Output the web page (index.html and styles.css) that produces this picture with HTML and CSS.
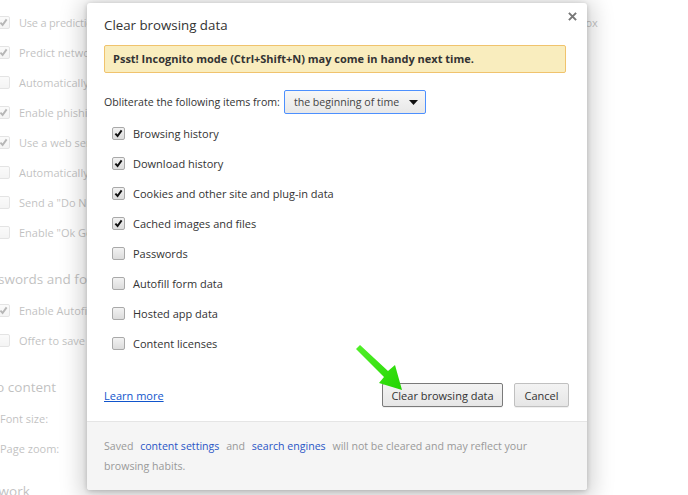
FILE: index.html
```html
<!DOCTYPE html>
<html lang="en">
<head>
    <meta charset="UTF-8">
    <meta name="viewport" content="width=device-width, initial-scale=1.0">
    <title>Settings - Clear browsing data</title>
    <link rel="stylesheet" href="styles.css">
</head>
<body>
    <!-- settings page behind the overlay -->
    <div class="settings">
        <div class="row long"><span class="cb on"><svg viewBox="0 0 13 13"><path d="M2.8 6.6 L5.4 9.4 L10.2 2.8" /></svg></span><span class="row-text">Use a prediction service to help complete searches and URLs typed in the address bar or the app launcher search box</span></div>
        <div class="row"><span class="cb on"><svg viewBox="0 0 13 13"><path d="M2.8 6.6 L5.4 9.4 L10.2 2.8" /></svg></span><span class="row-text">Predict network actions to improve page load performance</span></div>
        <div class="row"><span class="cb"></span><span class="row-text">Automatically report details of possible security incidents to Google</span></div>
        <div class="row"><span class="cb on"><svg viewBox="0 0 13 13"><path d="M2.8 6.6 L5.4 9.4 L10.2 2.8" /></svg></span><span class="row-text">Enable phishing and malware protection</span></div>
        <div class="row"><span class="cb on"><svg viewBox="0 0 13 13"><path d="M2.8 6.6 L5.4 9.4 L10.2 2.8" /></svg></span><span class="row-text">Use a web service to help resolve spelling errors</span></div>
        <div class="row"><span class="cb"></span><span class="row-text">Automatically send usage statistics and crash reports to Google</span></div>
        <div class="row"><span class="cb"></span><span class="row-text">Send a "Do Not Track" request with your browsing traffic</span></div>
        <div class="row"><span class="cb"></span><span class="row-text">Enable "Ok Google" to start a voice search</span></div>

        <h3 class="section">Passwords and forms</h3>
        <div class="row"><span class="cb on"><svg viewBox="0 0 13 13"><path d="M2.8 6.6 L5.4 9.4 L10.2 2.8" /></svg></span><span class="row-text">Enable Autofill to fill out web forms in a single click.</span></div>
        <div class="row"><span class="cb"></span><span class="row-text">Offer to save your web passwords.</span></div>

        <h3 class="section">Web content</h3>
        <div class="row plain">Font size:</div>
        <div class="row plain">Page zoom:</div>

        <h3 class="section last">Network</h3>
    </div>

    <div class="dialog">
        <div class="dialog-body">
            <h1 class="dialog-title">Clear browsing data</h1>
            <button class="close" aria-label="Close">
                <svg viewBox="0 0 10 10"><path d="M1 1 L9 9 M9 1 L1 9" /></svg>
            </button>

            <div class="notice">Psst! Incognito mode (Ctrl+Shift+N) may come in handy next time.</div>

            <div class="from-row">
                <span>Obliterate the following items from:</span>
                <div class="select">
                    <span>the beginning of time</span>
                    <svg class="select-arrow" viewBox="0 0 9 5"><path d="M0 0 H9 L4.5 5 Z" /></svg>
                </div>
            </div>

            <ul class="items">
                <li><span class="cb on"><svg viewBox="0 0 13 13"><path d="M2.8 6.6 L5.4 9.4 L10.2 2.8" /></svg></span>Browsing history</li>
                <li><span class="cb on"><svg viewBox="0 0 13 13"><path d="M2.8 6.6 L5.4 9.4 L10.2 2.8" /></svg></span>Download history</li>
                <li><span class="cb on"><svg viewBox="0 0 13 13"><path d="M2.8 6.6 L5.4 9.4 L10.2 2.8" /></svg></span>Cookies and other site and plug-in data</li>
                <li><span class="cb on"><svg viewBox="0 0 13 13"><path d="M2.8 6.6 L5.4 9.4 L10.2 2.8" /></svg></span>Cached images and files</li>
                <li><span class="cb"></span>Passwords</li>
                <li><span class="cb"></span>Autofill form data</li>
                <li><span class="cb"></span>Hosted app data</li>
                <li><span class="cb"></span>Content licenses</li>
            </ul>

            <div class="actions">
                <a class="learn-more" href="#">Learn more</a>
                <div class="buttons">
                    <button class="btn btn-default">Clear browsing data</button>
                    <button class="btn">Cancel</button>
                </div>
            </div>
        </div>

        <div class="dialog-footer">
            Saved <a href="#">content settings</a> and <a href="#">search engines</a> will not be cleared and may reflect your browsing habits.
        </div>
    </div>

    <!-- green pointer drawn over the dialog -->
    <svg class="pointer" viewBox="0 0 60 60">
        <defs>
            <linearGradient id="arrowFill" x1="0" y1="0" x2="1" y2="1">
                <stop offset="0" stop-color="#52f02a" />
                <stop offset="1" stop-color="#22d400" />
            </linearGradient>
        </defs>
        <polygon points="6,9 10,5 38,31 45,25 52,50 29,43 34,37" fill="url(#arrowFill)" />
    </svg>
</body>
</html>
```

FILE: styles.css
```css
* {
    margin: 0;
    padding: 0;
    box-sizing: border-box;
}

body {
    font-family: 'Open Sans', 'Noto Sans', sans-serif;
    font-size: 11px;
    color: #333;
    background: #fff;
    width: 688px;
    height: 495px;
    overflow: hidden;
    position: relative;
}

/* ---------- faded settings page ---------- */

.settings {
    opacity: 0.3;
    width: 712px;
    padding-top: 7px;
    margin-left: -24px;
    white-space: nowrap;
    overflow: hidden;
}

.row {
    display: flex;
    align-items: center;
    height: 30px;
    padding-left: 21px;
    font-size: 11px;
}

.row.long {
    letter-spacing: -0.2px;
}

.row .cb {
    margin-right: 9px;
}

.row.plain {
    padding-left: 24px;
}

.section {
    font-size: 13.5px;
    font-weight: normal;
    line-height: 20px;
    margin: 22px 0 6px;
}

.section.last {
    margin-top: 18px;
}

/* ---------- checkbox ---------- */

.cb {
    display: inline-block;
    flex: none;
    width: 13px;
    height: 13px;
    border: 1px solid #a9a9a9;
    border-radius: 2px;
    background: linear-gradient(#f2f2f2, #dcdcdc);
}

.cb svg {
    display: block;
    width: 11px;
    height: 11px;
}

.cb path {
    fill: none;
    stroke: #111;
    stroke-width: 2.3;
}

/* ---------- dialog ---------- */

.dialog {
    position: absolute;
    left: 87px;
    top: 3px;
    width: 500px;
    height: 487px;
    background: #fff;
    border-radius: 3px;
    box-shadow: 0 4px 22px 6px rgba(0, 0, 0, 0.18), 0 1px 5px rgba(0, 0, 0, 0.2);
    display: flex;
    flex-direction: column;
    overflow: hidden;
}

.dialog-body {
    position: relative;
    flex: 1;
    padding: 12px 18px 0 17px;
}

.dialog-title {
    font-size: 13.3px;
    font-weight: normal;
    line-height: 20px;
    color: #333;
}

.close {
    position: absolute;
    top: 9px;
    right: 10px;
    width: 9px;
    height: 9px;
    border: none;
    background: none;
    cursor: pointer;
}

.close svg {
    display: block;
    width: 9px;
    height: 9px;
}

.close path {
    stroke: #777;
    stroke-width: 2.2;
}

.notice {
    margin: 10px 3px 0 0;
    height: 28px;
    line-height: 26px;
    padding-left: 8px;
    background: #f9edbe;
    border: 1px solid #f0c36d;
    border-radius: 2px;
    font-weight: bold;
    color: #333;
}

.from-row {
    display: flex;
    align-items: center;
    gap: 4px;
    margin-top: 17px;
    font-size: 10.6px;
    white-space: nowrap;
}

.select {
    display: flex;
    align-items: center;
    justify-content: space-between;
    width: 142px;
    height: 24px;
    padding: 0 7px 0 9px;
    border: 1px solid #4d90fe;
    border-radius: 2px;
    background: linear-gradient(#f7f7f7, #e8e8e8);
    color: #444;
}

.select-arrow {
    width: 9px;
    height: 5px;
    fill: #111;
}

.items {
    list-style: none;
    margin-top: 4px;
}

.items li {
    display: flex;
    align-items: center;
    height: 30px;
    padding-left: 8px;
}

.items .cb {
    margin-right: 8px;
}

.actions {
    display: flex;
    align-items: center;
    justify-content: space-between;
    margin-top: 25px;
}

.learn-more {
    color: #15c;
    text-decoration: underline;
}

.buttons {
    display: flex;
    gap: 11px;
}

.btn {
    height: 24px;
    padding: 0 6px;
    font-family: inherit;
    font-size: 11px;
    color: #333;
    white-space: nowrap;
    border: 1px solid #c0c0c0;
    border-radius: 2px;
    background: linear-gradient(#f3f3f3, #e6e6e6);
    box-shadow: 0 1px 0 rgba(0, 0, 0, 0.06);
    cursor: pointer;
}

.btn-default {
    width: 121px;
    border-color: #7a7a7a;
}

.btn + .btn {
    width: 55px;
}

.dialog-footer {
    height: 69px;
    padding: 14px 12px 0 17px;
    background: #f5f5f5;
    border-top: 1px solid #e5e5e5;
    color: #999;
    font-size: 10.6px;
    line-height: 20px;
}

.dialog-footer a {
    color: #2a56c6;
    text-decoration: none;
    margin: 0 4px;
}

/* ---------- annotation ---------- */

.pointer {
    position: absolute;
    left: 350px;
    top: 340px;
    width: 60px;
    height: 60px;
}
```
